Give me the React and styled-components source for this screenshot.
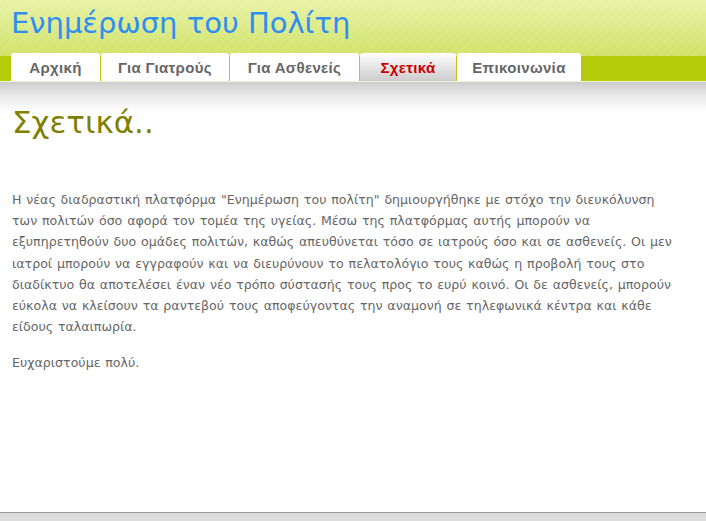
import React from 'react';
import styled, { createGlobalStyle } from 'styled-components';

const GlobalStyle = createGlobalStyle`
  html, body {
    margin: 0;
    padding: 0;
    background: #fff;
  }
  body {
    font-family: "DejaVu Sans", Verdana, sans-serif;
  }
`;

const Page = styled.div`
  display: flex;
  flex-direction: column;
  min-height: 521px;
`;

const Header = styled.header`
  background:
    repeating-linear-gradient(135deg, rgba(255, 255, 255, 0.06) 0 3px, rgba(255, 255, 255, 0) 3px 6px),
    linear-gradient(to bottom, #e8f2a8 0%, #d6e778 50%, #c6da48 100%);
`;

const SiteTitle = styled.h1`
  margin: 0;
  padding: 6px 0 0 11px;
  height: 47px;
  box-sizing: border-box;
  font-family: "DejaVu Sans", Verdana, sans-serif;
  font-weight: normal;
  font-size: 29px;
  line-height: 34px;
  color: #2e8ef2;
`;

const NavBar = styled.nav`
  display: flex;
  align-items: flex-end;
  gap: 1px;
  padding: 0 0 0 11px;
  height: 35px;
  box-sizing: border-box;
  background: linear-gradient(to bottom, transparent 0, transparent 9px, #b4cc0a 9px, #b4cc0a 100%);
  border-bottom: 1px solid #eef3d0;
`;

const Tab = styled.a`
  display: flex;
  align-items: center;
  justify-content: center;
  width: ${(p) => p.$width}px;
  height: 28px;
  padding-top: 1px;
  box-sizing: border-box;
  border-radius: 3px 3px 0 0;
  font-family: "Liberation Sans", Arial, sans-serif;
  font-weight: bold;
  font-size: 15px;
  letter-spacing: 0.35px;
  text-decoration: none;
  cursor: pointer;
  color: ${(p) => (p.$active ? '#cc0000' : '#666')};
  background: ${(p) =>
    p.$active ? 'linear-gradient(to bottom, #ffffff 0%, #e8e8e8 45%, #cccccc 100%)' : '#ffffff'};
`;

const Shade = styled.div`
  height: 30px;
  background: linear-gradient(to bottom, #cdcdcd 0%, #e8e8e8 45%, #ffffff 100%);
`;

const Content = styled.main`
  flex: 1;
  padding: 0 12px;
`;

const Heading = styled.h2`
  margin: -9px 0 0 0;
  font-family: "DejaVu Sans", Verdana, sans-serif;
  font-weight: normal;
  font-size: 31px;
  line-height: 38px;
  color: #808000;
`;

const Text = styled.p`
  width: 668px;
  margin: 0 0 15px 0;
  font-size: 12.6px;
  word-spacing: 0.8px;
  line-height: 21.2px;
  color: #666;
  &:first-of-type {
    margin-top: 48px;
  }
`;

const Footer = styled.footer`
  height: 8px;
  border-top: 1px solid #999;
  background: #ddd;
`;

const tabs = [
  { label: 'Αρχική', width: 89 },
  { label: 'Για Γιατρούς', width: 128 },
  { label: 'Για Ασθενείς', width: 129 },
  { label: 'Σχετικά', width: 96, active: true },
  { label: 'Επικοινωνία', width: 124 },
];

export default function App() {
  return (
    <Page>
      <GlobalStyle />
      <Header>
        <SiteTitle>Ενημέρωση του Πολίτη</SiteTitle>
        <NavBar>
          {tabs.map((t) => (
            <Tab key={t.label} $width={t.width} $active={t.active}>
              {t.label}
            </Tab>
          ))}
        </NavBar>
      </Header>
      <Shade />
      <Content>
        <Heading>Σχετικά..</Heading>
        <Text>
          Η νέας διαδραστική πλατφόρμα "Ενημέρωση του πολίτη" δημιουργήθηκε με στόχο την διευκόλυνση
          των πολιτών όσο αφορά τον τομέα της υγείας. Μέσω της πλατφόρμας αυτής μπορούν να
          εξυπηρετηθούν δυο ομάδες πολιτών, καθώς απευθύνεται τόσο σε ιατρούς όσο και σε ασθενείς. Οι
          μεν ιατροί μπορούν να εγγραφούν και να διευρύνουν το πελατολόγιο τους καθώς η προβολή τους
          στο διαδίκτυο θα αποτελέσει έναν νέο τρόπο σύστασής τους προς το ευρύ κοινό. Οι δε
          ασθενείς, μπορούν εύκολα να κλείσουν τα ραντεβού τους αποφεύγοντας την αναμονή σε
          τηλεφωνικά κέντρα και κάθε είδους ταλαιπωρία.
        </Text>
        <Text>Ευχαριστούμε πολύ.</Text>
      </Content>
      <Footer />
    </Page>
  );
}
